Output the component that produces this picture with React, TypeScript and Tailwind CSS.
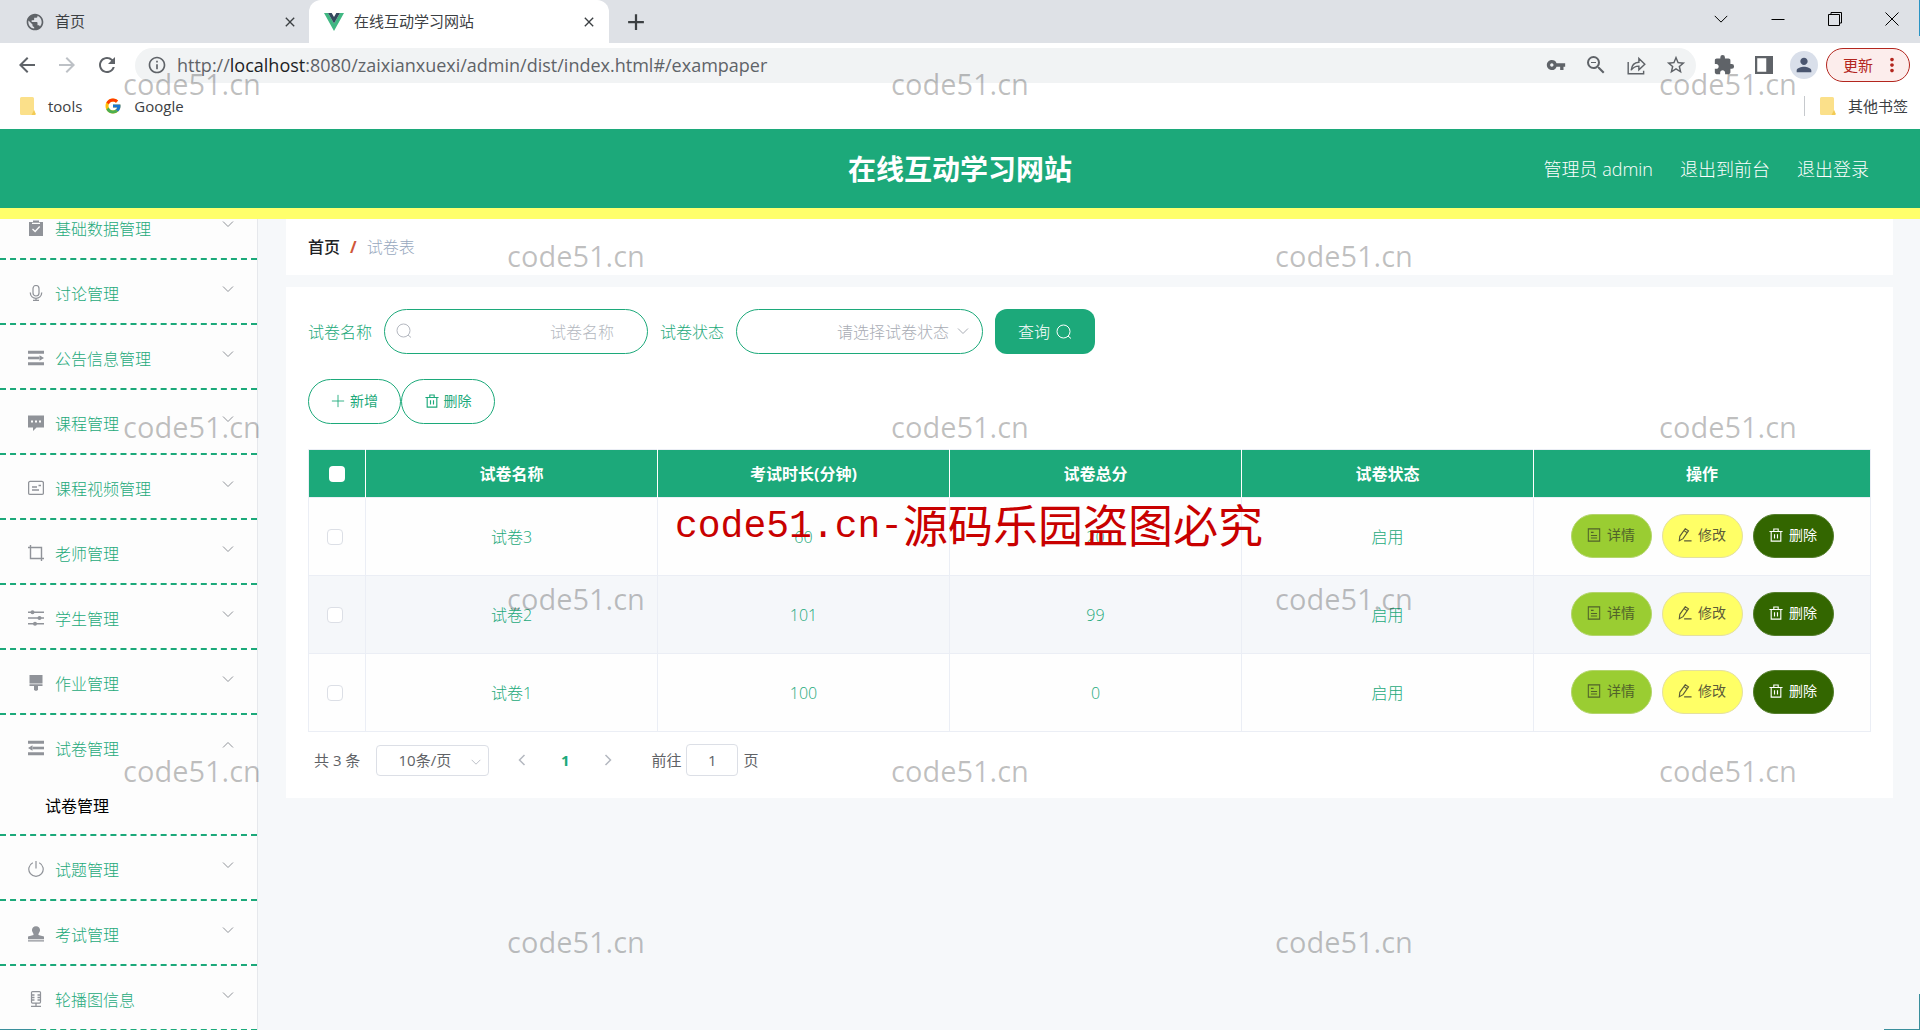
import type { ReactNode } from "react";
import { FcGoogle } from "react-icons/fc";
import {
  MdArrowBack,
  MdArrowForward,
  MdClose,
  MdExtension,
  MdInfoOutline,
  MdMoreVert,
  MdOutlineZoomOut,
  MdPerson,
  MdPublic,
  MdRefresh,
  MdStarBorder,
  MdVpnKey,
} from "react-icons/md";

interface IconProps {
  className?: string;
  children?: ReactNode;
}

const Svg = ({ className = "w-4 h-4", children }: IconProps) => (
  <svg viewBox="0 0 16 16" className={className} fill="none" stroke="currentColor" aria-hidden="true">
    {children}
  </svg>
);

const Chevron = ({ className }: IconProps) => (
  <Svg className={className}><path d="M3 5.5l5 5 5-5" /></Svg>
);
const SearchIcon = ({ className }: IconProps) => (
  <Svg className={className}><circle cx="7.5" cy="7.5" r="6.500" /><path d="M12 12l3 2.500" /></Svg>
);
const TrashIcon = ({ className }: IconProps) => (
  <Svg className={className}><path strokeWidth="1.300" d="M.5 4h15M2.500 4v11h11V4M5.500 4V1.200h5V4M6.300 7v5M9.700 7v5" /></Svg>
);
const PlusIcon = ({ className }: IconProps) => (
  <Svg className={className}><path d="M8 1v14M1 8h14" /></Svg>
);
const DetailIcon = ({ className }: IconProps) => (
  <Svg className={className}><path strokeWidth="1.200" d="M1.500 1h13v14h-13zM4.500 5h3M4.500 8.500h7M4.500 11.500h7" /></Svg>
);
const EditIcon = ({ className }: IconProps) => (
  <Svg className={className}><path strokeWidth="1.300" d="M1.500 14.500l.6-5L8.300.8l3.700 2.500-6.200 8.900zM6.900 3l3.600 2.500M7 14.700h8.500" /></Svg>
);

const Folder = () => (
  <svg viewBox="0 0 16 18" className="w-4 h-[18px]" aria-hidden="true">
    <path d="M1.500 0h11a1.500 1.500 0 011.500 1.500V13l1.500 3.500a1 1 0 01-1 1.500h-13A1.500 1.500 0 010 16.500v-15A1.500 1.500 0 011.500 0z" fill="#fbe08a" />
    <path d="M14 13l1.500 3.500a1 1 0 01-1 1.500H11.500z" fill="#f3cb55" />
  </svg>
);

const menus = [
  { title: "基础数据管理", icon: <><path fill="currentColor" stroke="none" d="M1 2h4V.5h6V2h4v14H1z" /><path d="M4 3.300h8M4.500 9l2.600 2.500 4.600-5" stroke="#fdfdfd" strokeWidth="1.300" /></> },
  { title: "讨论管理", icon: <><rect x="5" y=".5" width="6" height="10.500" rx="3" strokeWidth="1.200" /><path d="M2.300 7.500C2.300 15.200 13.700 15.200 13.700 7.500M8 13v2.500M5 15.400h6" strokeWidth="1.300" /></> },
  { title: "公告信息管理", icon: <><path strokeWidth="3" d="M0 2.200h16M0 13.800h16" /><path strokeWidth="2.600" d="M0 8h11.500" /><path fill="currentColor" stroke="none" d="M11.500 5.200L16 8l-4.500 2.800z" /></> },
  { title: "课程管理", icon: <><path fill="currentColor" stroke="none" d="M0 .5h16v12H8.500L5 16v-3.500H0z" /><path d="M3 6.500h2M7 6.500h2M11 6.500h2" stroke="#fdfdfd" strokeWidth="2" /></> },
  { title: "课程视频管理", icon: <><rect x=".6" y="1.400" width="14.800" height="13" rx="1.500" strokeWidth="1.300" /><path strokeWidth="1.400" d="M4 7h5M4 10h7M10.500 5.500H13" /></> },
  { title: "老师管理", icon: <path strokeWidth="1.400" d="M0 2.500h13.500V16M2.500 0v13.500H16" /> },
  { title: "学生管理", icon: <><path strokeWidth="1.600" d="M0 2.300h16M0 8h16M0 13.700h16" /><g fill="currentColor" stroke="none"><circle cx="4.500" cy="2.300" r="2" /><circle cx="11.500" cy="8" r="2" /><circle cx="7" cy="13.700" r="2" /></g></> },
  { title: "作业管理", icon: <path fill="currentColor" stroke="none" d="M1.500 0h13v8.500h-13zM1.500 9.300h13V11H10v4l-2 1-2-1v-4H1.500z" /> },
  { title: "试卷管理", open: true, icon: <><path strokeWidth="3" d="M0 2.200h16M0 13.800h16" /><path strokeWidth="2.600" d="M4.500 8H16" /><path fill="currentColor" stroke="none" d="M4.500 5.200L0 8l4.500 2.800z" /></> },
  { title: "试题管理", icon: <path strokeWidth="1.200" d="M8 0v7.500M4.800 1.700a7.200 7.200 0 106.400 0" /> },
  { title: "考试管理", icon: <path fill="currentColor" stroke="none" d="M8 .2a4 4 0 014 4.600c-.3 1.700-1.600 2.200-1.600 4.200l5.600 1.500v2.700H0v-2.700L5.600 9c0-2-1.300-2.500-1.600-4.200A4 4 0 018 .2zM0 14.200h16v1.300H0z" /> },
  { title: "轮播图信息", icon: <><rect x="3.500" y=".6" width="9" height="11.500" rx="1" strokeWidth="1.200" /><path d="M3.500 4h3M3.500 6.500h3M3.500 9h3M9.500 4h3M9.500 6.500h3M9.500 9h3M8 12v3M3 15.300h10" strokeWidth="1.300" /></> },
];

const papers = [
  { name: "试卷3", minutes: 60, score: 20, status: "启用" },
  { name: "试卷2", minutes: 101, score: 99, status: "启用" },
  { name: "试卷1", minutes: 100, score: 0, status: "启用" },
];

const iconBtn = "w-10 flex justify-center";
const actionBtn = "w-[81px] h-11 pb-[2px] rounded-full border text-sm flex items-center justify-center gap-[6px]";

const Browser = () => (
  <div className="shrink-0 bg-white text-[#3c4043] text-[15px]">
    <div className="h-[43px] bg-[#dee1e6] flex items-center justify-between">
      <div className="flex items-center h-full">
        <div className="w-[309px] flex items-center pl-[25px] pr-[7px]">
          <MdPublic className="w-5 h-5 text-[#5f6368]" />
          <span className="ml-[10px] flex-1">首页</span>
          <button aria-label="关闭首页" className="p-1"><MdClose className="w-4 h-4" /></button>
        </div>
        <div className="w-[300px] h-full rounded-t-xl bg-white flex items-center pl-[15px] pr-2">
          <svg viewBox="0 0 20 18" className="w-5 h-[18px]" aria-hidden="true">
            <path d="M0 0h4l6 10.500L16 0h4L10 18z" fill="#41b883" />
            <path d="M4 0h3.700L10 4l2.300-4H16l-6 10.500z" fill="#34495e" />
          </svg>
          <span className="ml-[10px] flex-1">在线互动学习网站</span>
          <button aria-label="关闭标签页" className="p-1"><MdClose className="w-4 h-4" /></button>
        </div>
        <button aria-label="新标签页" className="ml-[18px]"><PlusIcon className="w-[18px] h-[18px] stroke-2" /></button>
      </div>
      <div className="flex items-center pb-[6px] text-black">
        <button aria-label="搜索标签页" className="w-[57px] flex justify-center"><Chevron className="w-5 h-5 stroke-[0.8]" /></button>
        <button aria-label="最小化" className="w-[57px] flex justify-center"><Svg className="w-4 h-4"><path d="M1.500 8.500h13" /></Svg></button>
        <button aria-label="还原" className="w-[57px] flex justify-center"><Svg className="w-4 h-4"><path d="M1.500 3.500h11v11h-11zM4 3.500v-2h10.500V12H12.500" /></Svg></button>
        <button aria-label="关闭窗口" className="w-[57px] flex justify-center"><Svg className="w-4 h-4"><path d="M1.500 1.500l13 13M14.500 1.500l-13 13" /></Svg></button>
      </div>
    </div>
    <div className="h-11 flex items-center pl-[7px] pr-[10px] text-[#5f6368]">
      <button aria-label="后退" className={iconBtn}><MdArrowBack className="w-6 h-6" /></button>
      <button aria-label="前进" className={iconBtn}><MdArrowForward className="w-6 h-6 text-[#bdc1c6]" /></button>
      <button aria-label="刷新" className={iconBtn}><MdRefresh className="w-6 h-6" /></button>
      <div className="ml-2 flex-1 h-[35px] rounded-full bg-[#f1f3f4] flex items-center pl-3">
        <MdInfoOutline className="w-5 h-5" />
        <span className="ml-[10px] flex-1 text-lg">
          http://<span className="text-[#202124]">localhost</span>:8080/zaixianxuexi/admin/dist/index.html#/exampaper
        </span>
        <button aria-label="密码" className={iconBtn}><MdVpnKey className="w-5 h-5" /></button>
        <button aria-label="缩放" className={iconBtn}><MdOutlineZoomOut className="w-6 h-6" /></button>
        <button aria-label="分享" className={iconBtn}>
          <Svg className="w-[19px] h-[19px]"><path strokeWidth="1.200" d="M1 5v10h13v-2.500M3.500 12C4 7.500 6.500 5.500 10 5.300V2l5 5-5 4.700V8.500C7 8.500 5 9.500 3.500 12z" /></Svg>
        </button>
        <button aria-label="收藏" className={iconBtn}><MdStarBorder className="w-[22px] h-[22px]" /></button>
      </div>
      <div className="ml-2 flex items-center">
        <button aria-label="扩展程序" className={iconBtn}><MdExtension className="w-[22px] h-[22px]" /></button>
        <button aria-label="侧边栏" className={iconBtn}>
          <Svg className="w-[18px] h-[18px]"><path strokeWidth="2" d="M1 1h14v14H1z" /><path fill="currentColor" stroke="none" d="M10 1h5v14h-5z" /></Svg>
        </button>
        <button aria-label="用户" className={iconBtn}>
          <span className="w-7 h-7 rounded-full bg-[#d9dfea] text-[#4a5670] flex items-center justify-center"><MdPerson className="w-[22px] h-[22px]" /></span>
        </button>
        <button className="ml-[2px] w-[84px] h-[34px] rounded-full border border-[#b3261e] bg-[#fcedec] text-[#b3261e] flex items-center justify-between pl-4 pr-[6px]">
          更新<MdMoreVert className="w-[22px] h-[22px]" />
        </button>
      </div>
    </div>
    <div className="h-[42px] pb-1 flex items-center pl-5 pr-3">
      <a href="#tools" className="flex items-center gap-3"><Folder />tools</a>
      <a href="#google" className="ml-[22px] flex items-center gap-3"><FcGoogle className="w-[18px] h-[18px]" />Google</a>
      <a href="#others" className="ml-auto flex items-center gap-3">
        <span className="w-px h-5 bg-[#c6c9cd]" /><span className="flex items-center gap-3 ml-[3px]"><Folder />其他书签</span>
      </a>
    </div>
  </div>
);

const Header = () => (
  <header className="shrink-0 h-[90px] bg-[#1ca97a] border-b-[11px] border-[#ffff6b] grid grid-cols-3 items-center text-white">
    <span />
    <h1 className="text-center text-[28px] font-bold">在线互动学习网站</h1>
    <nav className="flex justify-end gap-[27px] pr-[51px] text-lg font-light">
      <span>管理员 admin</span>
      <a href="#front">退出到前台</a>
      <a href="#login">退出登录</a>
    </nav>
  </header>
);

const Sidebar = () => (
  <aside className="shrink-0 w-[258px] bg-[#fdfdfd] border-r border-[#e6e8ec] overflow-hidden">
    {/* the list is scrolled a little, so the first entry is cut by the header */}
    <ul className="-mt-6">
      {menus.map((m) => (
        <li key={m.title} className="border-b-2 border-dashed border-[#1ca97a]">
          <button className="w-full h-[63px] pt-1 pl-7 pr-[21px] flex items-center text-[#1ca97a]">
            <Svg className="w-4 h-4 mb-[2px] text-[#909399]">{m.icon}</Svg>
            <span className="ml-[11px] flex-1 text-left font-light">{m.title}</span>
            <Chevron className={m.open ? "w-4 h-4 mb-2 text-[#909399] rotate-180" : "w-4 h-4 mb-[10px] text-[#909399]"} />
          </button>
          {m.open && <a href="#exampaper" className="h-14 pl-[45px] flex items-center text-black">试卷管理</a>}
        </li>
      ))}
    </ul>
  </aside>
);

const Filters = () => (
  <form className="flex items-center gap-3 text-[#1ca97a] font-light">
    <label htmlFor="name">试卷名称</label>
    <div className="relative">
      <input id="name" placeholder="试卷名称" className="w-[264px] h-[45px] pl-10 pr-[33px] text-right rounded-full border border-[#1ca97a] placeholder:text-[#b4b8c0] outline-none" />
      <SearchIcon className="absolute left-3 top-[14px] w-4 h-4 text-[#b4b8c0]" />
    </div>
    <label htmlFor="status">试卷状态</label>
    <div className="relative">
      <select id="status" className="w-[247px] h-[45px] pr-[33px] [text-align-last:right] appearance-none bg-white rounded-full border border-[#1ca97a] text-[#a8acb4] outline-none">
        <option>请选择试卷状态</option>
      </select>
      <Chevron className="absolute right-3 top-[14px] w-4 h-4 text-[#a8acb4] pointer-events-none" />
    </div>
    <button type="button" className="w-[100px] h-[45px] rounded-xl bg-[#1ca97a] text-white flex items-center justify-center gap-[6px]">
      查询<SearchIcon className="w-4 h-4" />
    </button>
  </form>
);

const PaperTable = () => (
  <table className="w-full table-fixed border-collapse text-center text-[#1ca97a] border border-[#ebeef5]">
    <colgroup>
      <col className="w-[57px]" />
      <col />
      <col />
      <col />
      <col />
      <col className="w-[337px]" />
    </colgroup>
    <thead>
      <tr className="h-12 bg-[#1ca97a] text-white">
        <th className="border-r border-white"><input type="checkbox" aria-label="全选" className="block mx-auto w-4 h-4 appearance-none bg-white rounded-sm" /></th>
        <th className="border-r border-white">试卷名称</th>
        <th className="border-r border-white">考试时长(分钟)</th>
        <th className="border-r border-white">试卷总分</th>
        <th className="border-r border-white">试卷状态</th>
        <th>操作</th>
      </tr>
    </thead>
    <tbody className="font-light">
      {papers.map((p) => (
        <tr key={p.name} className="h-[78px] bg-[#fefefe] even:bg-[#f5f7fa]">
          <td className="border border-[#ebeef5]"><input type="checkbox" aria-label={p.name} className="block ml-[18px] w-4 h-4 appearance-none bg-white border border-[#dcdfe6] rounded-sm" /></td>
          <td className="border border-[#ebeef5]">{p.name}</td>
          <td className="border border-[#ebeef5]">{p.minutes}</td>
          <td className="border border-[#ebeef5]">{p.score}</td>
          <td className="border border-[#ebeef5]">{p.status}</td>
          <td className="border border-[#ebeef5]">
            <div className="flex justify-center gap-[10px] pb-[2px] font-normal">
              <button className={`${actionBtn} bg-[#9acd32] border-[#b4d56c] text-[#50622a]`}><DetailIcon className="w-[14px] h-[14px]" />详情</button>
              <button className={`${actionBtn} bg-[#ffff66] border-[#e4e0a0] text-[#5c5c38]`}><EditIcon className="w-[14px] h-[14px]" />修改</button>
              <button className={`${actionBtn} bg-[#336600] border-[#547e2c] text-white`}><TrashIcon className="w-[14px] h-[14px]" />删除</button>
            </div>
          </td>
        </tr>
      ))}
    </tbody>
  </table>
);

const Pagination = () => (
  <div className="mt-3 pl-[6px] flex items-center text-[15px] text-[#606266]">
    <span>共 3 条</span>
    <div className="relative ml-4">
      <select aria-label="每页条数" className="w-[113px] h-[31px] pr-4 appearance-none [text-align-last:center] bg-white border border-[#dcdfe6] rounded-sm">
        <option>10条/页</option>
      </select>
      <Chevron className="absolute right-[6px] top-[10px] w-[14px] h-[14px] text-[#b4b8c0] pointer-events-none" />
    </div>
    <button aria-label="上一页" className="ml-[22px] w-[22px] flex justify-center"><Chevron className="w-4 h-4 rotate-90 stroke-[1.500] text-[#b4b8c0]" /></button>
    <button className="w-16 font-bold text-[#1ca97a]">1</button>
    <button aria-label="下一页" className="w-[22px] flex justify-center"><Chevron className="w-4 h-4 -rotate-90 stroke-[1.500] text-[#b4b8c0]" /></button>
    <label htmlFor="page" className="ml-8">前往</label>
    <input id="page" defaultValue="1" className="mx-[5px] w-[52px] h-8 text-center bg-white border border-[#dcdfe6] rounded outline-none" />
    <span>页</span>
  </div>
);

const marks = Array.from({ length: 30 }, (_, i) => i);

// 5 x 6 watermark cells, every second one is filled
const Watermark = () => (
  <div className="absolute inset-0 pointer-events-none">
    <div className="w-full h-full grid grid-cols-5 grid-rows-6 place-items-center text-[29px] text-black/25">
      {marks.map((i) => <span key={i} className="pb-1">{i % 2 === 0 ? "code51.cn" : ""}</span>)}
    </div>
    <div className="absolute left-[675px] top-[496px] flex items-center text-[#c80000] whitespace-nowrap">
      <span className="font-['Liberation_Mono',monospace] text-[38px]">code51.cn-</span>
      <span className="text-[45px] leading-[60px]">源码乐园盗图必究</span>
    </div>
  </div>
);

// slivers of the desktop that show behind the window's edges
const DesktopEdges = () => (
  <div className="pointer-events-none">
    <div className="absolute right-0 top-0 w-px h-9 bg-[#2a94c4]" />
    <div className="absolute right-0 bottom-0 w-px h-9 bg-[#3a8f9c]" />
    <div className="absolute right-0 bottom-0 w-9 h-px bg-[#3a8f9c]" />
    <div className="absolute left-0 bottom-0 w-[34px] h-px bg-[#3a8f9c]" />
  </div>
);

const App = () => (
  <div className="relative h-screen flex flex-col overflow-hidden text-base font-['Open_Sans','Noto_Sans_CJK_SC',sans-serif]">
    <Browser />
    <Header />
    <div className="flex-1 min-h-0 flex bg-[#f6f8fa]">
      <Sidebar />
      <main className="flex-1 min-w-0 pl-7 pr-[27px]">
        <div className="h-14 px-[22px] bg-white flex items-center">
          <a href="#home" className="font-medium text-[#202124]">首页</a>
          <span className="mx-[10px] font-bold text-[#d0573a]">/</span>
          <span className="text-[#97a8be] font-light">试卷表</span>
        </div>
        <section className="mt-3 px-[22px] pt-[22px] pb-[22px] bg-white">
          <Filters />
          <div className="mt-[25px] mb-[25px] flex text-sm text-[#1ca97a]">
            <button className="w-[93px] h-[45px] pb-[2px] rounded-full border border-[#1ca97a] flex items-center justify-center gap-[5px]"><PlusIcon className="w-[14px] h-[14px]" />新增</button>
            <button className="w-[94px] h-[45px] pb-[2px] rounded-full border border-[#1ca97a] flex items-center justify-center gap-[5px]"><TrashIcon className="w-[14px] h-[14px]" />删除</button>
          </div>
          <PaperTable />
          <Pagination />
        </section>
      </main>
    </div>
    <Watermark />
    <DesktopEdges />
  </div>
);

export default App;
